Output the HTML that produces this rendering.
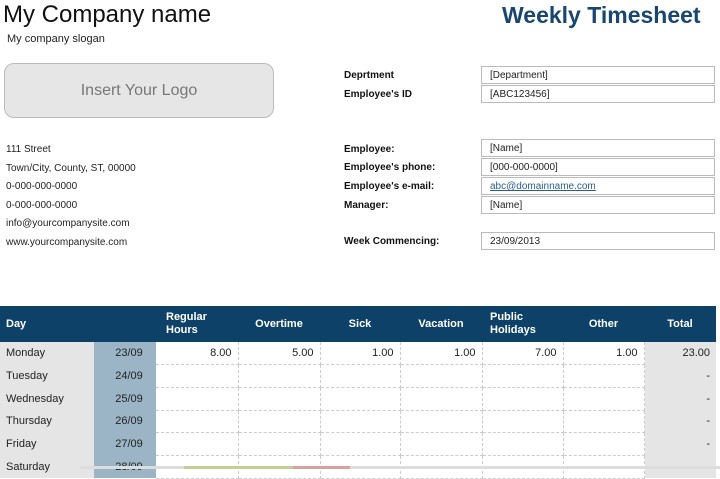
<!DOCTYPE html>
<html><head><meta charset="utf-8"><style>
body{margin:0;width:720px;height:469px;overflow:hidden;background:#fff;font-family:"Liberation Sans",Arial,sans-serif;color:#222;position:relative}
.a{position:absolute;white-space:nowrap}
.lbl{font-size:10px;font-weight:bold;color:#111}
.box{position:absolute;left:481px;width:234px;height:18px;border:1px solid #bbb;font-size:10px;line-height:18px;padding-left:8px;box-sizing:border-box;color:#222}
.addr{font-size:10px;left:6px}
table{position:absolute;left:0;top:306px;width:716px;table-layout:fixed;border-collapse:collapse;font-size:11px}
td{height:22.7px;padding:0 6px;box-sizing:border-box;border-right:1px dashed #ccc;border-bottom:1px dashed #ccc;text-align:right;overflow:hidden;white-space:nowrap}
th{background:#0e4168;color:#fff;font-weight:bold;height:36px;font-size:11px;text-align:center;padding:0 4px;line-height:13px;overflow:hidden}
td.d{background:#e5e5e5;text-align:left;border:none}
td.dt{background:#9bb5c6;text-align:center;border:none;padding-left:14px}
td.t{background:#e5e5e5;border:none}
</style></head><body>
<div class="a" style="left:3px;top:1px;font-size:24px;color:#111">My Company name</div>
<div class="a" style="left:7px;top:33px;font-size:11px">My company slogan</div>
<div class="a" style="left:502px;top:2px;font-size:23px;font-weight:bold;color:#1a4770">Weekly Timesheet</div>
<div class="a" style="left:4px;top:63px;width:270px;height:55px;box-sizing:border-box;border:1px solid #bbb;border-radius:10px;background:#e6e6e6;text-align:center;line-height:53px;font-size:16px;color:#777">Insert Your Logo</div>
<div class="a addr" style="top:144px">111 Street</div>
<div class="a addr" style="top:163px">Town/City, County, ST, 00000</div>
<div class="a addr" style="top:181px">0-000-000-0000</div>
<div class="a addr" style="top:200px">0-000-000-0000</div>
<div class="a addr" style="top:218px">info@yourcompanysite.com</div>
<div class="a addr" style="top:237px">www.yourcompanysite.com</div>
<div class="a lbl" style="left:344px;top:70px">Deprtment</div>
<div class="a lbl" style="left:344px;top:89px">Employee's ID</div>
<div class="a lbl" style="left:344px;top:144px">Employee:</div>
<div class="a lbl" style="left:344px;top:162px">Employee's phone:</div>
<div class="a lbl" style="left:344px;top:181px">Employee's e-mail:</div>
<div class="a lbl" style="left:344px;top:200px">Manager:</div>
<div class="a lbl" style="left:344px;top:236px">Week Commencing:</div>
<div class="box" style="top:66px">[Department]</div>
<div class="box" style="top:85px">[ABC123456]</div>
<div class="box" style="top:139px">[Name]</div>
<div class="box" style="top:158px">[000-000-0000]</div>
<div class="box" style="top:177px;color:#2a5d8f;text-decoration:underline">abc@domainname.com</div>
<div class="box" style="top:196px">[Name]</div>
<div class="box" style="top:232px">23/09/2013</div>
<table>
<colgroup><col style="width:94px"><col style="width:62px"><col style="width:82px"><col style="width:82px"><col style="width:80px"><col style="width:82px"><col style="width:81px"><col style="width:81px"><col style="width:72px"></colgroup>
<tr><th style="text-align:left;padding-left:6px">Day</th><th></th><th style="text-align:left;padding-left:10px">Regular<br>Hours</th><th>Overtime</th><th>Sick</th><th>Vacation</th><th style="text-align:left;padding-left:8px">Public<br>Holidays</th><th>Other</th><th>Total</th></tr>
<tr><td class="d">Monday</td><td class="dt">23/09</td><td>8.00</td><td>5.00</td><td>1.00</td><td>1.00</td><td>7.00</td><td>1.00</td><td class="t">23.00</td></tr>
<tr><td class="d">Tuesday</td><td class="dt">24/09</td><td></td><td></td><td></td><td></td><td></td><td></td><td class="t">-</td></tr>
<tr><td class="d">Wednesday</td><td class="dt">25/09</td><td></td><td></td><td></td><td></td><td></td><td></td><td class="t">-</td></tr>
<tr><td class="d">Thursday</td><td class="dt">26/09</td><td></td><td></td><td></td><td></td><td></td><td></td><td class="t">-</td></tr>
<tr><td class="d">Friday</td><td class="dt">27/09</td><td></td><td></td><td></td><td></td><td></td><td></td><td class="t">-</td></tr>
<tr><td class="d">Saturday</td><td class="dt">28/09</td><td></td><td></td><td></td><td></td><td></td><td></td><td class="t">-</td></tr>
</table>
<div class="a" style="left:80px;top:466px;width:640px;height:3px;background:#ddd"></div>
<div class="a" style="left:184px;top:466px;width:109px;height:3px;background:#c4cc98"></div>
<div class="a" style="left:293px;top:466px;width:57px;height:3px;background:#d9a0a0"></div>
</body></html>
